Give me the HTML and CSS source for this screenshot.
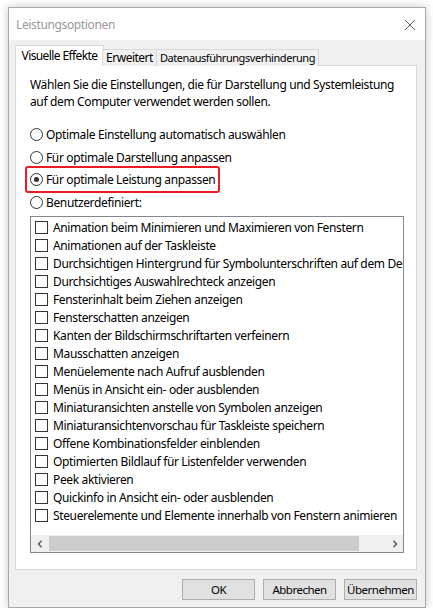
FILE: index.html
```html
<!DOCTYPE html>
<html lang="de">
<head>
    <meta charset="UTF-8">
    <meta name="viewport" content="width=device-width, initial-scale=1.0">
    <title>Leistungsoptionen</title>
    <link rel="stylesheet" href="styles.css">
</head>
<body>
    <div class="window">
        <div class="titlebar">
            <span class="title">Leistungsoptionen</span>
            <svg class="close" width="12" height="12" viewBox="0 0 12 12">
                <path d="M1 1 L11 11 M11 1 L1 11" stroke="#5f5f5f" stroke-width="1" fill="none"/>
            </svg>
        </div>
        <div class="content">
            <div class="tabs">
                <div class="tab active tab-visual">Visuelle Effekte</div>
                <div class="tab tab-adv">Erweitert</div>
                <div class="tab tab-dep">Datenausführungsverhinderung</div>
            </div>
            <div class="panel">
                <p class="desc">Wählen Sie die Einstellungen, die für Darstellung und Systemleistung<br>auf dem Computer verwendet werden sollen.</p>
                <div class="radios">
                    <label class="radio"><span class="dot"></span>Optimale Einstellung automatisch auswählen</label>
                    <label class="radio"><span class="dot"></span>Für optimale Darstellung anpassen</label>
                    <label class="radio marked"><span class="dot checked"></span>Für optimale Leistung anpassen</label>
                    <label class="radio"><span class="dot"></span>Benutzerdefiniert:</label>
                </div>
                <div class="listbox">
                    <ul class="items">
                        <li><span class="box"></span>Animation beim Minimieren und Maximieren von Fenstern</li>
                        <li><span class="box"></span>Animationen auf der Taskleiste</li>
                        <li><span class="box"></span>Durchsichtigen Hintergrund für Symbolunterschriften auf dem Desktop</li>
                        <li><span class="box"></span>Durchsichtiges Auswahlrechteck anzeigen</li>
                        <li><span class="box"></span>Fensterinhalt beim Ziehen anzeigen</li>
                        <li><span class="box"></span>Fensterschatten anzeigen</li>
                        <li><span class="box"></span>Kanten der Bildschirmschriftarten verfeinern</li>
                        <li><span class="box"></span>Mausschatten anzeigen</li>
                        <li><span class="box"></span>Menüelemente nach Aufruf ausblenden</li>
                        <li><span class="box"></span>Menüs in Ansicht ein- oder ausblenden</li>
                        <li><span class="box"></span>Miniaturansichten anstelle von Symbolen anzeigen</li>
                        <li><span class="box"></span>Miniaturansichtenvorschau für Taskleiste speichern</li>
                        <li><span class="box"></span>Offene Kombinationsfelder einblenden</li>
                        <li><span class="box"></span>Optimierten Bildlauf für Listenfelder verwenden</li>
                        <li><span class="box"></span>Peek aktivieren</li>
                        <li><span class="box"></span>Quickinfo in Ansicht ein- oder ausblenden</li>
                        <li><span class="box"></span>Steuerelemente und Elemente innerhalb von Fenstern animieren</li>
                    </ul>
                    <div class="hscroll">
                        <div class="arrow">
                            <svg width="6" height="8" viewBox="0 0 6 8"><path d="M4.5 0.8 L1.5 4 L4.5 7.2" stroke="#606060" stroke-width="1.6" fill="none"/></svg>
                        </div>
                        <div class="track"><div class="thumb"></div></div>
                        <div class="arrow">
                            <svg width="6" height="8" viewBox="0 0 6 8"><path d="M1.5 0.8 L4.5 4 L1.5 7.2" stroke="#606060" stroke-width="1.6" fill="none"/></svg>
                        </div>
                    </div>
                </div>
            </div>
            <div class="buttons">
                <button class="btn">OK</button>
                <button class="btn">Abbrechen</button>
                <button class="btn">Übernehmen</button>
            </div>
        </div>
    </div>
</body>
</html>
```

FILE: styles.css
```css
body {
    margin: 0;
    background: #ffffff;
    font-family: "Noto Sans", "Open Sans", sans-serif;
    font-size: 12px;
    letter-spacing: -0.36px;
    color: #000;
}

.window {
    margin: 7px 0 0 8px;
    width: 418px;
    height: 601px;
    box-sizing: border-box;
    border: 1px solid #a8a8a8;
    background: #f0f0f0;
    box-shadow: 0 0 9px rgba(0,0,0,0.22);
}

.titlebar {
    height: 32px;
    background: #fff;
    display: flex;
    align-items: center;
    justify-content: space-between;
    padding: 0 9px 0 7px;
}

.title {
    color: #999;
    font-size: 12px;
}

.close {
    margin-top: 1px;
}

.content {
    padding: 5px 8px 0 6px;
}

.tabs {
    display: flex;
    align-items: flex-end;
    height: 21px;
    margin-bottom: -1px;
    position: relative;
    z-index: 1;
}

.tab {
    box-sizing: border-box;
    height: 17px;
    line-height: 16px;
    border: 1px solid #d9d9d9;
    border-bottom: none;
    margin-left: -1px;
    background: #f0f0f0;
    white-space: nowrap;
    text-align: center;
}

.tab:first-child {
    margin-left: 0;
}

.tab.active {
    height: 21px;
    line-height: 20px;
    background: #fff;
    margin-right: -1px;
}

.tab-visual {
    width: 89px;
    letter-spacing: -0.6px;
}

.tab-adv {
    width: 55px;
    letter-spacing: -0.5px;
}

.tab-dep {
    width: 163px;
    font-size: 11px;
    letter-spacing: -0.45px;
}

.panel {
    background: #fff;
    border: 1px solid #d9d9d9;
    padding: 10px 12px 16px 14px;
}

.desc {
    margin: 0 0 16px 0;
    line-height: 17px;
    white-space: nowrap;
}

.radios {
    display: flex;
    flex-direction: column;
    gap: 5.6px;
    margin-bottom: 5.5px;
}

.radio {
    display: flex;
    align-items: center;
    height: 17px;
    white-space: nowrap;
    position: relative;
    align-self: flex-start;
}

.marked::after {
    content: "";
    position: absolute;
    left: -5px;
    right: -5px;
    top: -5px;
    bottom: -5px;
    border: 2px solid #ec1c24;
    border-radius: 3px;
}

.dot {
    width: 11px;
    height: 11px;
    border: 1px solid #333;
    border-radius: 50%;
    margin-right: 3px;
    background: #fff;
    position: relative;
}

.dot.checked::after {
    content: "";
    position: absolute;
    left: 3px;
    top: 3px;
    width: 5px;
    height: 5px;
    border-radius: 50%;
    background: #333;
}

.listbox {
    height: 337px;
    box-sizing: border-box;
    border: 1px solid #828790;
    display: flex;
    flex-direction: column;
}

.items {
    list-style: none;
    margin: 0;
    padding: 1px 0 0 4px;
    flex: 1;
    overflow: hidden;
}

.items li {
    height: 18px;
    display: flex;
    align-items: center;
    white-space: nowrap;
}

.box {
    width: 11px;
    height: 11px;
    border: 1px solid #333;
    margin-right: 5px;
    flex-shrink: 0;
}

.hscroll {
    height: 17px;
    display: flex;
    background: #f0f0f0;
}

.arrow {
    width: 17px;
    display: flex;
    align-items: center;
    justify-content: center;
}

.track {
    flex: 1;
    padding: 1px 0;
    display: flex;
}

.thumb {
    margin-left: 1px;
    width: 310px;
    background: #cdcdcd;
}

.buttons {
    display: flex;
    justify-content: flex-end;
    gap: 8px;
    margin-top: 9px;
}

.btn {
    width: 73px;
    height: 21px;
    font-family: inherit;
    font-size: 11.5px;
    letter-spacing: -0.5px;
    background: #e1e1e1;
    border: 1px solid #adadad;
    padding: 0;
    color: #000;
}
```
